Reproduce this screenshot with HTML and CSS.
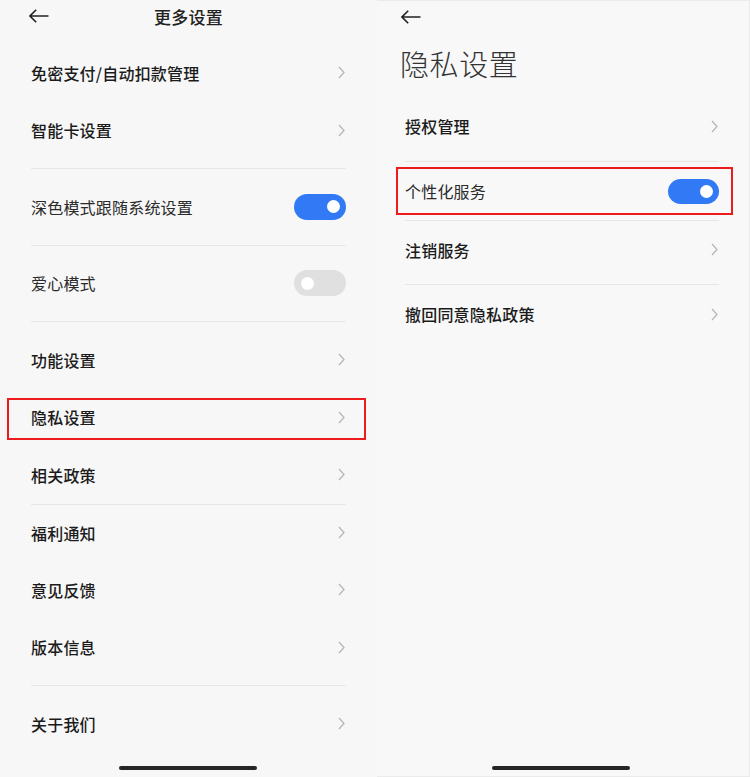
FILE: index.html
```html
<!DOCTYPE html>
<html lang="zh-CN">
<head>
<meta charset="utf-8">
<title>设置</title>
<link rel="stylesheet" href="styles.css">
</head>
<body>
<div class="page">
  <section class="screen screen-left">
    <header class="topbar">
      <svg class="back" width="20" height="14" viewBox="0 0 20 14"><path d="M1 7H19.5M7.2 0.8L1 7L7.2 13.2" fill="none" stroke="#222" stroke-width="1.6"/></svg>
      <h1 class="bar-title">更多设置</h1>
      <span></span>
    </header>
    <div class="list list-left">
      <div class="row"><span class="label">免密支付/自动扣款管理</span><svg class="chev" width="7" height="13" viewBox="0 0 7 13"><path d="M1 1L6 6.5L1 12" fill="none" stroke="#b4b4b4" stroke-width="1.2"/></svg></div>
      <div class="row"><span class="label">智能卡设置</span><svg class="chev" width="7" height="13" viewBox="0 0 7 13"><path d="M1 1L6 6.5L1 12" fill="none" stroke="#b4b4b4" stroke-width="1.2"/></svg></div>
      <div class="sep"></div>
      <div class="row"><span class="label light">深色模式跟随系统设置</span><span class="toggle on"></span></div>
      <div class="sep"></div>
      <div class="row"><span class="label light">爱心模式</span><span class="toggle off"></span></div>
      <div class="sep"></div>
      <div class="row"><span class="label">功能设置</span><svg class="chev" width="7" height="13" viewBox="0 0 7 13"><path d="M1 1L6 6.5L1 12" fill="none" stroke="#b4b4b4" stroke-width="1.2"/></svg></div>
      <div class="row marked marked-left"><span class="label">隐私设置</span><svg class="chev" width="7" height="13" viewBox="0 0 7 13"><path d="M1 1L6 6.5L1 12" fill="none" stroke="#b4b4b4" stroke-width="1.2"/></svg></div>
      <div class="row"><span class="label">相关政策</span><svg class="chev" width="7" height="13" viewBox="0 0 7 13"><path d="M1 1L6 6.5L1 12" fill="none" stroke="#b4b4b4" stroke-width="1.2"/></svg></div>
      <div class="row ruled"><span class="label">福利通知</span><svg class="chev" width="7" height="13" viewBox="0 0 7 13"><path d="M1 1L6 6.5L1 12" fill="none" stroke="#b4b4b4" stroke-width="1.2"/></svg></div>
      <div class="row"><span class="label">意见反馈</span><svg class="chev" width="7" height="13" viewBox="0 0 7 13"><path d="M1 1L6 6.5L1 12" fill="none" stroke="#b4b4b4" stroke-width="1.2"/></svg></div>
      <div class="row"><span class="label">版本信息</span><svg class="chev" width="7" height="13" viewBox="0 0 7 13"><path d="M1 1L6 6.5L1 12" fill="none" stroke="#b4b4b4" stroke-width="1.2"/></svg></div>
      <div class="sep"></div>
      <div class="row"><span class="label">关于我们</span><svg class="chev" width="7" height="13" viewBox="0 0 7 13"><path d="M1 1L6 6.5L1 12" fill="none" stroke="#b4b4b4" stroke-width="1.2"/></svg></div>
    </div>
    <div class="home"><span class="home-bar"></span></div>
  </section>

  <section class="screen screen-right">
    <header class="topbar topbar-right">
      <svg class="back" width="20" height="14" viewBox="0 0 20 14"><path d="M1 7H19.5M7.2 0.8L1 7L7.2 13.2" fill="none" stroke="#222" stroke-width="1.6"/></svg>
    </header>
    <h1 class="big-title">隐私设置</h1>
    <div class="list list-right">
      <div class="row"><span class="label">授权管理</span><svg class="chev" width="7" height="13" viewBox="0 0 7 13"><path d="M1 1L6 6.5L1 12" fill="none" stroke="#b4b4b4" stroke-width="1.2"/></svg></div>
      <div class="sep-small"></div>
      <div class="row marked marked-right"><span class="label light">个性化服务</span><span class="toggle on"></span></div>
      <div class="row ruled"><span class="label">注销服务</span><svg class="chev" width="7" height="13" viewBox="0 0 7 13"><path d="M1 1L6 6.5L1 12" fill="none" stroke="#b4b4b4" stroke-width="1.2"/></svg></div>
      <div class="sep-small"></div>
      <div class="row"><span class="label">撤回同意隐私政策</span><svg class="chev" width="7" height="13" viewBox="0 0 7 13"><path d="M1 1L6 6.5L1 12" fill="none" stroke="#b4b4b4" stroke-width="1.2"/></svg></div>
    </div>
    <div class="home home-right"><span class="home-bar"></span></div>
  </section>
</div>
</body>
</html>
```
FILE: styles.css
```css
* { box-sizing: border-box; }
html, body {
  margin: 0;
  padding: 0;
  background: #f7f7f7;
}
body {
  font-family: "Noto Sans CJK SC", "Noto Sans", sans-serif;
  color: #1b1b1b;
}
.page {
  display: flex;
  width: 750px;
  height: 777px;
  overflow: hidden;
}
.screen {
  display: flex;
  flex-direction: column;
  height: 777px;
  background: #f7f7f7;
}
.screen-left {
  width: 377px;
}
.screen-right {
  width: 373px;
  background: #f8f8f8;
  border-top: 1px solid #ebebeb;
  border-right: 1px solid #ebebeb;
  border-bottom: 1px solid #ebebeb;
}

/* header */
.topbar {
  height: 32px;
  display: grid;
  grid-template-columns: 1fr auto 1fr;
  align-items: center;
  padding: 0 29px;
}
.topbar-right {
  height: 31px;
  padding: 0 24px;
}
.back { display: block; }
.bar-title {
  margin: 0;
  font-size: 17px;
  font-weight: 500;
  color: #222;
  letter-spacing: 0.3px;
}
.big-title {
  margin: 0;
  height: 65px;
  display: flex;
  align-items: center;
  padding-left: 23px;
  padding-bottom: 3px;
  font-size: 29px;
  font-weight: 300;
  color: #333;
  letter-spacing: 0.6px;
}

/* lists */
.list {
  display: flex;
  flex-direction: column;
}
.list-left {
  padding: 12px 31px 0 31px;
}
.list-right {
  padding: 0 30px 0 28px;
}
.row {
  position: relative;
  height: 57.5px;
  display: flex;
  align-items: center;
  justify-content: space-between;
}
.list-right .row { height: 58px; }
.label {
  font-size: 16px;
  font-weight: 500;
  color: #1b1b1b;
  letter-spacing: 0.2px;
}
.label.light {
  font-weight: 400;
  color: #2a2a2a;
}
.chev {
  display: block;
  margin-right: 1px;
}
.sep {
  height: 19px;
  display: flex;
  align-items: center;
}
.sep::before {
  content: "";
  flex: 1;
  height: 1px;
  background: #e7e7e7;
}
.sep-small {
  height: 7px;
  display: flex;
  align-items: flex-end;
}
.sep-small::before {
  content: "";
  flex: 1;
  height: 1px;
  background: #e7e7e7;
}
.row.ruled {
  border-top: 1px solid #e7e7e7;
}

/* toggles */
.toggle {
  position: relative;
  width: 52px;
  height: 26px;
  border-radius: 13px;
  display: block;
}
.toggle::after {
  content: "";
  position: absolute;
  top: 6.5px;
  width: 13px;
  height: 13px;
  border-radius: 50%;
  background: #fff;
}
.toggle.on { background: #3279f5; }
.toggle.on::after { right: 6.5px; }
.toggle.off { background: #e0e0e0; }
.toggle.off::after { left: 6.5px; }
.list-right .toggle { width: 51px; height: 25px; }
.list-right .toggle::after { top: 6px; }

/* red annotation boxes */
.marked::after {
  content: "";
  position: absolute;
  border: 2px solid #ec1c1c;
  pointer-events: none;
}
.marked-left::after {
  top: 9px;
  bottom: 6px;
  left: -24px;
  right: -20px;
}
.marked-right::after {
  top: 5px;
  bottom: 5px;
  left: -9px;
  right: -14px;
}

/* home indicator */
.home {
  margin-top: auto;
  display: flex;
  justify-content: center;
  padding-bottom: 7px;
  padding-right: 1px;
}
.home-right {
  padding-bottom: 6px;
  padding-right: 5px;
}
.home-bar {
  width: 138px;
  height: 4px;
  border-radius: 2px;
  background: #262626;
}
```
